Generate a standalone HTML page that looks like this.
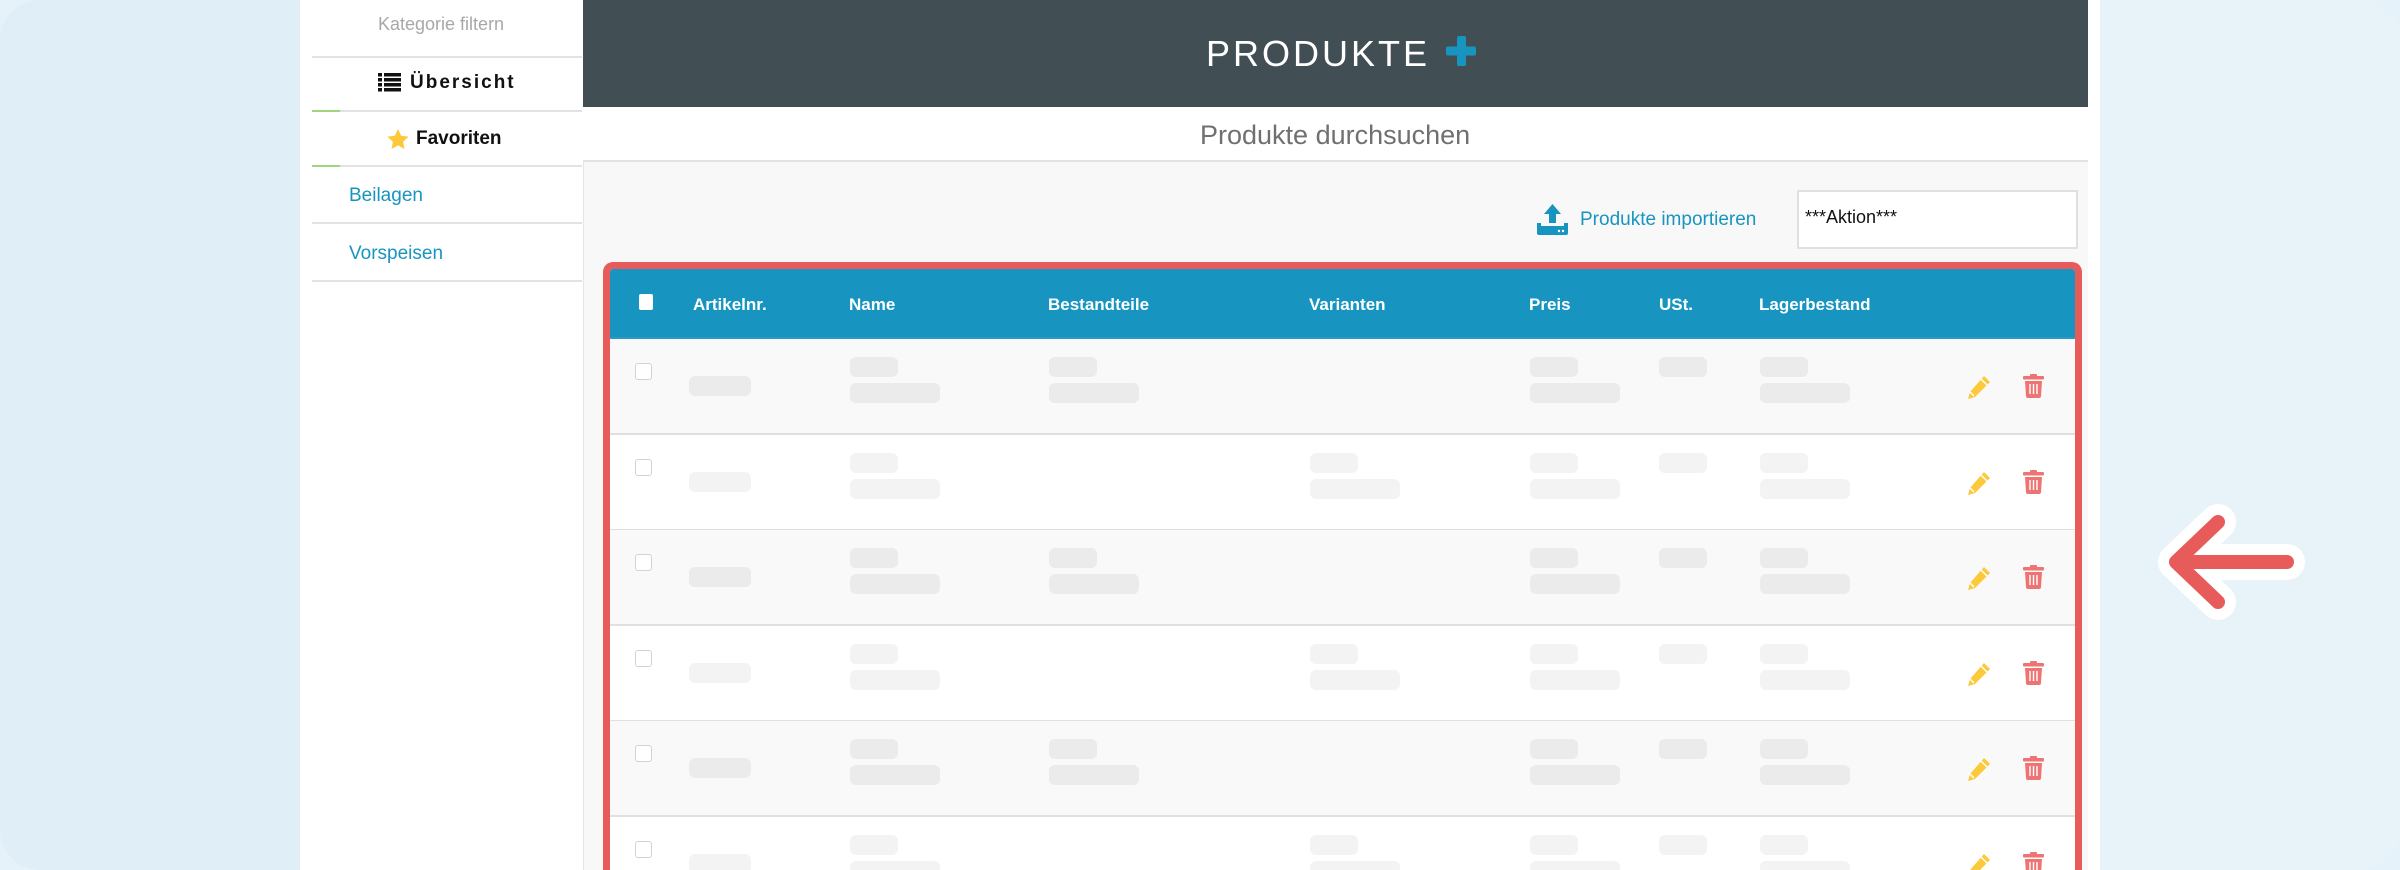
<!DOCTYPE html>
<html><head><meta charset="utf-8"><style>
*{margin:0;padding:0;box-sizing:border-box}
html,body{width:2400px;height:870px;overflow:hidden}
body{background:#e6f2f9;font-family:"Liberation Sans",sans-serif;position:relative}
.bg{position:absolute;left:0;top:0;width:2400px;height:870px;border-radius:40px;background:linear-gradient(90deg,#dfeef7,#e8f3f9)}
.panel{position:absolute;left:300px;top:0;width:1800px;height:870px;background:#fff}
.side{position:absolute;left:300px;top:0;width:282px;height:870px;background:#fff}
.ln{position:absolute;left:312px;width:270px;height:2px;background:#e2e2e2}
.gr{position:absolute;left:312px;width:28px;height:2px;background:#9fd67f}
.t{position:absolute;white-space:nowrap}
.main{position:absolute;left:583px;top:0;width:1505px;height:870px;background:#f8f8f8;border-left:1px solid #e5e5e5}
.hdr{position:absolute;left:583px;top:0;width:1505px;height:107px;background:#414f55}
.sub{position:absolute;left:583px;top:107px;width:1505px;height:55px;background:#fff;border-bottom:2px solid #e2e2e2}
.tbl{position:absolute;left:603px;top:262px;width:1479px;height:608px;border:7px solid #e85b5b;border-bottom:none;border-radius:10px 10px 0 0;overflow:hidden;background:#fff}
.th{position:absolute;left:0;top:0;width:1465px;height:70px;background:#1795c0;border-bottom:2px solid #2a9cc4}
.th span{position:absolute;top:26px;color:#fff;font-weight:bold;font-size:17px}
.row{position:absolute;left:0;width:1465px;height:96px;border-bottom:2px solid #e0e0e0}
.o{background:#f9f9f9}.o .b{background:#ebebeb}
.e{background:#fff}.e .b{background:#f3f3f3}
.b{position:absolute;height:20px;border-radius:6px}
.s{top:18px;width:48px}.l{top:44px;width:90px}
.cb{position:absolute;left:25px;top:24px;width:17px;height:17px;border:1.5px solid #d3d3d3;border-radius:3px;background:#fff}
.a{left:79px;top:37px;width:62px}
.pen{position:absolute;left:1356px;top:36px}
.tr{position:absolute;left:1413px;top:35px}
</style></head><body>
<div class="bg"></div>
<div class="panel"></div>
<div class="side"></div>
<div class="t" style="left:378px;top:14px;font-size:18px;color:#a8a8a8">Kategorie filtern</div>
<div class="ln" style="top:56px"></div>
<svg class="t" style="left:378px;top:73px" width="23" height="19" viewBox="0 0 23 19"><g fill="#111"><rect x="0" y="0" width="4" height="3.5"/><rect x="6" y="0" width="17" height="3.5"/><rect x="0" y="5" width="4" height="3.5"/><rect x="6" y="5" width="17" height="3.5"/><rect x="0" y="10" width="4" height="3.5"/><rect x="6" y="10" width="17" height="3.5"/><rect x="0" y="15" width="4" height="3.5"/><rect x="6" y="15" width="17" height="3.5"/></g></svg>
<div class="t" style="left:410px;top:72px;font-size:19px;font-weight:bold;letter-spacing:2px;color:#111">Übersicht</div>
<div class="ln" style="top:110px"></div><div class="gr" style="top:110px"></div>
<svg class="t" style="left:387px;top:129px" width="22" height="21" viewBox="0 0 24 23"><path d="M12 0l3.5 7.4 8 1-5.9 5.5 1.5 8L12 18l-7.1 3.9 1.5-8L.5 8.4l8-1z" fill="#fcc93b"/></svg>
<div class="t" style="left:416px;top:128px;font-size:19px;font-weight:bold;color:#111">Favoriten</div>
<div class="ln" style="top:165px"></div><div class="gr" style="top:165px"></div>
<div class="t" style="left:349px;top:185px;font-size:19px;color:#1795c0">Beilagen</div>
<div class="ln" style="top:222px"></div>
<div class="t" style="left:349px;top:243px;font-size:19px;color:#1795c0">Vorspeisen</div>
<div class="ln" style="top:280px"></div>

<div class="main"></div>
<div class="hdr"></div>
<div class="t" style="left:1206px;top:33px;font-size:36px;letter-spacing:3px;color:#fff">PRODUKTE</div>
<svg class="t" style="left:1446px;top:36px" width="30" height="30" viewBox="0 0 30 30"><rect x="11" y="0" width="9" height="30" rx="2" fill="#1795c0"/><rect x="0" y="10.5" width="30" height="9" rx="2" fill="#1795c0"/></svg>
<div class="sub"></div>
<div class="t" style="left:1200px;top:120px;font-size:27px;color:#707070">Produkte durchsuchen</div>

<svg class="t" style="left:1537px;top:204px" width="31" height="31" viewBox="0 0 31 31"><path d="M15.5 0L24 10h-5v9h-7v-9H7z" fill="#1795c0"/><rect x="0" y="22" width="31" height="9" rx="2" fill="#1795c0"/><rect x="0" y="19" width="4" height="5" fill="#1795c0"/><rect x="27" y="19" width="4" height="5" fill="#1795c0"/><circle cx="22" cy="27" r="1.2" fill="#fff"/><circle cx="26" cy="27" r="1.2" fill="#fff"/></svg>
<div class="t" style="left:1580px;top:209px;font-size:19px;color:#1795c0">Produkte importieren</div>
<div style="position:absolute;left:1797px;top:190px;width:281px;height:59px;background:#fff;border:2px solid #e0e0e0"></div>
<div class="t" style="left:1805px;top:207px;font-size:18px;color:#111">***Aktion***</div>

<div class="tbl">
<div class="th">
<div style="position:absolute;left:29px;top:25px;width:14px;height:16px;background:#fff;border-radius:2px"></div>
<span style="left:83px">Artikelnr.</span><span style="left:239px">Name</span><span style="left:438px">Bestandteile</span><span style="left:699px">Varianten</span><span style="left:919px">Preis</span><span style="left:1049px">USt.</span><span style="left:1149px">Lagerbestand</span>
</div>

<div class="row o" style="top:70px"><div class="cb"></div><div class="b a"></div><div class="b s" style="left:240px"></div><div class="b l" style="left:240px"></div><div class="b s" style="left:439px"></div><div class="b l" style="left:439px"></div><div class="b s" style="left:920px"></div><div class="b l" style="left:920px"></div><div class="b s" style="left:1049px"></div><div class="b s" style="left:1150px"></div><div class="b l" style="left:1150px"></div>
<svg class="pen" width="25" height="25" viewBox="0 0 25 25"><path d="M18 1l6 6L9 22l-7 2 2-7z" fill="#fcc93b"/><path d="M4 17l4 4M15 4l6 6" stroke="#fff" stroke-width="1.5"/></svg>
<svg class="tr" width="21" height="24" viewBox="0 0 21 24"><rect x="7" y="0" width="7" height="3" rx="1" fill="#ee7474"/><rect x="0" y="2" width="21" height="3.5" rx="1" fill="#ee7474"/><path d="M2 7h17l-1 15a2 2 0 0 1-2 2H5a2 2 0 0 1-2-2z" fill="#ee7474"/><path d="M7 10v10M10.5 10v10M14 10v10" stroke="#fff" stroke-width="1.4"/></svg></div>

<div class="row e" style="top:165.6px"><div class="cb"></div><div class="b a"></div><div class="b s" style="left:240px"></div><div class="b l" style="left:240px"></div><div class="b s" style="left:700px"></div><div class="b l" style="left:700px"></div><div class="b s" style="left:920px"></div><div class="b l" style="left:920px"></div><div class="b s" style="left:1049px"></div><div class="b s" style="left:1150px"></div><div class="b l" style="left:1150px"></div>
<svg class="pen" width="25" height="25" viewBox="0 0 25 25"><path d="M18 1l6 6L9 22l-7 2 2-7z" fill="#fcc93b"/><path d="M4 17l4 4M15 4l6 6" stroke="#fff" stroke-width="1.5"/></svg>
<svg class="tr" width="21" height="24" viewBox="0 0 21 24"><rect x="7" y="0" width="7" height="3" rx="1" fill="#ee7474"/><rect x="0" y="2" width="21" height="3.5" rx="1" fill="#ee7474"/><path d="M2 7h17l-1 15a2 2 0 0 1-2 2H5a2 2 0 0 1-2-2z" fill="#ee7474"/><path d="M7 10v10M10.5 10v10M14 10v10" stroke="#fff" stroke-width="1.4"/></svg></div>

<div class="row o" style="top:261.2px"><div class="cb"></div><div class="b a"></div><div class="b s" style="left:240px"></div><div class="b l" style="left:240px"></div><div class="b s" style="left:439px"></div><div class="b l" style="left:439px"></div><div class="b s" style="left:920px"></div><div class="b l" style="left:920px"></div><div class="b s" style="left:1049px"></div><div class="b s" style="left:1150px"></div><div class="b l" style="left:1150px"></div>
<svg class="pen" width="25" height="25" viewBox="0 0 25 25"><path d="M18 1l6 6L9 22l-7 2 2-7z" fill="#fcc93b"/><path d="M4 17l4 4M15 4l6 6" stroke="#fff" stroke-width="1.5"/></svg>
<svg class="tr" width="21" height="24" viewBox="0 0 21 24"><rect x="7" y="0" width="7" height="3" rx="1" fill="#ee7474"/><rect x="0" y="2" width="21" height="3.5" rx="1" fill="#ee7474"/><path d="M2 7h17l-1 15a2 2 0 0 1-2 2H5a2 2 0 0 1-2-2z" fill="#ee7474"/><path d="M7 10v10M10.5 10v10M14 10v10" stroke="#fff" stroke-width="1.4"/></svg></div>

<div class="row e" style="top:356.8px"><div class="cb"></div><div class="b a"></div><div class="b s" style="left:240px"></div><div class="b l" style="left:240px"></div><div class="b s" style="left:700px"></div><div class="b l" style="left:700px"></div><div class="b s" style="left:920px"></div><div class="b l" style="left:920px"></div><div class="b s" style="left:1049px"></div><div class="b s" style="left:1150px"></div><div class="b l" style="left:1150px"></div>
<svg class="pen" width="25" height="25" viewBox="0 0 25 25"><path d="M18 1l6 6L9 22l-7 2 2-7z" fill="#fcc93b"/><path d="M4 17l4 4M15 4l6 6" stroke="#fff" stroke-width="1.5"/></svg>
<svg class="tr" width="21" height="24" viewBox="0 0 21 24"><rect x="7" y="0" width="7" height="3" rx="1" fill="#ee7474"/><rect x="0" y="2" width="21" height="3.5" rx="1" fill="#ee7474"/><path d="M2 7h17l-1 15a2 2 0 0 1-2 2H5a2 2 0 0 1-2-2z" fill="#ee7474"/><path d="M7 10v10M10.5 10v10M14 10v10" stroke="#fff" stroke-width="1.4"/></svg></div>

<div class="row o" style="top:452.4px"><div class="cb"></div><div class="b a"></div><div class="b s" style="left:240px"></div><div class="b l" style="left:240px"></div><div class="b s" style="left:439px"></div><div class="b l" style="left:439px"></div><div class="b s" style="left:920px"></div><div class="b l" style="left:920px"></div><div class="b s" style="left:1049px"></div><div class="b s" style="left:1150px"></div><div class="b l" style="left:1150px"></div>
<svg class="pen" width="25" height="25" viewBox="0 0 25 25"><path d="M18 1l6 6L9 22l-7 2 2-7z" fill="#fcc93b"/><path d="M4 17l4 4M15 4l6 6" stroke="#fff" stroke-width="1.5"/></svg>
<svg class="tr" width="21" height="24" viewBox="0 0 21 24"><rect x="7" y="0" width="7" height="3" rx="1" fill="#ee7474"/><rect x="0" y="2" width="21" height="3.5" rx="1" fill="#ee7474"/><path d="M2 7h17l-1 15a2 2 0 0 1-2 2H5a2 2 0 0 1-2-2z" fill="#ee7474"/><path d="M7 10v10M10.5 10v10M14 10v10" stroke="#fff" stroke-width="1.4"/></svg></div>

<div class="row e" style="top:548px"><div class="cb"></div><div class="b a"></div><div class="b s" style="left:240px"></div><div class="b l" style="left:240px"></div><div class="b s" style="left:700px"></div><div class="b l" style="left:700px"></div><div class="b s" style="left:920px"></div><div class="b l" style="left:920px"></div><div class="b s" style="left:1049px"></div><div class="b s" style="left:1150px"></div><div class="b l" style="left:1150px"></div>
<svg class="pen" width="25" height="25" viewBox="0 0 25 25"><path d="M18 1l6 6L9 22l-7 2 2-7z" fill="#fcc93b"/><path d="M4 17l4 4M15 4l6 6" stroke="#fff" stroke-width="1.5"/></svg>
<svg class="tr" width="21" height="24" viewBox="0 0 21 24"><rect x="7" y="0" width="7" height="3" rx="1" fill="#ee7474"/><rect x="0" y="2" width="21" height="3.5" rx="1" fill="#ee7474"/><path d="M2 7h17l-1 15a2 2 0 0 1-2 2H5a2 2 0 0 1-2-2z" fill="#ee7474"/><path d="M7 10v10M10.5 10v10M14 10v10" stroke="#fff" stroke-width="1.4"/></svg></div>
</div>
<svg class="t" style="left:2140px;top:490px" width="180" height="150" viewBox="0 0 180 150"><g fill="none" stroke-linecap="round" stroke-linejoin="round"><path d="M147 72H36M78 32L36 72l42 40" stroke="#fff" stroke-width="36"/><path d="M147 72H36M78 32L36 72l42 40" stroke="#e85b5b" stroke-width="14"/></g></svg>
</body></html>
